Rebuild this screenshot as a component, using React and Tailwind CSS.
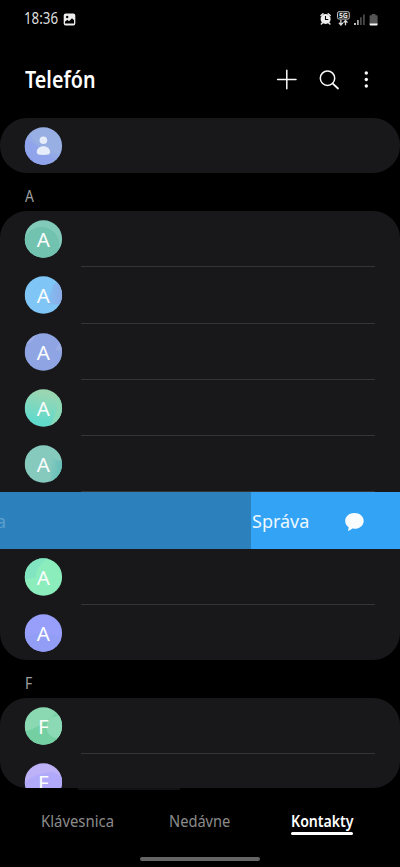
import React from "react";

const contactsA = [
  { letter: "A", base: "#82cbbb", shape: <circle cx="17" cy="25" r="18" fill="#72c2b0" /> },
  { letter: "A", base: "#7fc6f7", shape: <path d="M29 8 40 4V28L22 29Z" fill="url(#sky)" /> },
  { letter: "A", base: "#8fa5e3", shape: <path d="M0 12C6 10 11 6 12 0H0ZM31 17C32 13 35 10 38 9V18Z" fill="#9bade4" /> },
  { letter: "A", base: "url(#mint)", shape: <path d="M33 8C34 20 30 30 24 38H38V8Z" fill="#8fd8b4" opacity=".8" /> },
  { letter: "A", base: "#86cabe", shape: <path d="M26 9C30 14 34 16 38 16V38H25C27 32 27 27 25 24Z" fill="url(#teal)" /> },
  { swipe: true },
  { letter: "A", base: "#8aedbb", shape: <path d="M0 0H24C16 5 12 12 11 19L0 22Z" fill="#7fe2c3" opacity=".8" /> },
  { letter: "A", base: "#979ffa", shape: <path d="M0 24C12 17 26 18 38 25V38H0Z" fill="#929df6" /> },
];

const contactsF = [
  { letter: "F", base: "#8bd9b2", shape: <><path d="M0 25C14 20 25 13 32 6L38 38H0Z" fill="#74d0a2" /><circle cx="33" cy="20" r="11" fill="#8bdab5" /></> },
  { letter: "F", base: "#bdb2f8", shape: <path d="M0 20C10 10 21 10 29 9L38 14V38H0Z" fill="#b1aafa" /> },
];

function Avatar({ letter, base, shape, id }) {
  return (
    <svg className="block shrink-0" width="39" height="38" viewBox="-0.4 0 39 38">
      <defs>
        <clipPath id={id}>
          <circle cx="19" cy="19" r="18.7" />
        </clipPath>
        <linearGradient id="mint" x1="0.6" y1="0" x2="0.4" y2="1">
          <stop offset="0.1" stopColor="#9bd6b2" />
          <stop offset="0.85" stopColor="#62dacb" />
        </linearGradient>
        <linearGradient id="sky">
          <stop offset="0" stopColor="#7fc1f5" />
          <stop offset="1" stopColor="#8ea7e4" />
        </linearGradient>
        <linearGradient id="teal" x1="0" y1="0" x2="1" y2="0.5">
          <stop offset="0.2" stopColor="#83c9be" />
          <stop offset="1" stopColor="#63bdb8" />
        </linearGradient>
      </defs>
      <g clipPath={`url(#${id})`}>
        <rect width="38" height="38" fill={base} />
        {shape}
      </g>
      {letter && (
        <text x="19" y="27.300" textAnchor="middle" fontSize="20.500" fill="#fbfdfd">
          {letter}
        </text>
      )}
    </svg>
  );
}

function SwipeRow() {
  return (
    <div className="flex h-full w-full bg-[#32a3f5]">
      <div className="flex w-[251px] items-center overflow-hidden bg-[#2c81bc] pt-[2px] text-[18px] text-[#5b9fce]">
        <span className="-ml-[4px]">a</span>
      </div>
      <div className="flex flex-1 items-center justify-between pt-[2px] pr-[36.500px] pl-px">
        <span className="text-[18px] text-[#eef8ff]">Správa</span>
        <svg width="19" height="18" viewBox="0 0 19 18" fill="#fafcfe">
          <path d="M9.500 0C4.300 0 .2 3.400.2 7.900c0 2.600 1.200 4.800 3.400 6.200.1 1.300-.2 2.300-.6 3.300-.1.4.2.6.5.4 1.600-.6 2.900-1.400 4-2.200.6.1 1.300.1 2 .1 5.200 0 9.200-3.400 9.200-7.800S14.700 0 9.500 0Z" />
        </svg>
      </div>
    </div>
  );
}

function ContactRow({ contact, id, last }) {
  if (contact.swipe) {
    return (
      <div className="h-[56.300px]">
        <SwipeRow />
      </div>
    );
  }
  return (
    <div className="flex h-[56.300px] items-center pl-[24px]">
      <Avatar {...contact} id={id} />
      <div className={`mr-[25px] ml-[18px] flex-1 self-stretch border-b ${last ? "border-transparent" : "border-[#353537]"}`} />
    </div>
  );
}

function SectionLabel({ children }) {
  return (
    <div className="flex h-[38px] items-center pt-[9px] pl-[25px] text-[15.500px] leading-none text-[#a0a0a0]">
      <span className="origin-left scale-x-[0.9]">{children}</span>
    </div>
  );
}

function StatusBar() {
  return (
    <div className="flex h-[38px] items-center pl-[23.500px]">
      <div className="w-[39.500px] text-[15.500px] leading-none text-[#dedede]">
        <span className="inline-block origin-left scale-x-[0.860]">18:36</span>
      </div>
      <svg width="13" height="13" viewBox="0 0 13 13">
        <rect x=".7" y=".4" width="11.600" height="12" rx="2" fill="#ededed" />
        <circle cx="4.200" cy="4" r="1.200" fill="#000" />
        <path d="M2 10.500 2 8.800 4.300 6.800 6 8.300 9 5.200 11 7.200V10.500Z" fill="#000" />
      </svg>
      <svg className="mr-[21px] ml-auto" width="60" height="18" viewBox="0 0 60 18">
        <g stroke="#e8e8e8" strokeWidth="1.500" strokeLinecap="round">
          <path d="M2 5.500 4 3.700M11.200 5.500 9.200 3.700M2.300 14 3.700 12.600M10.900 14 9.500 12.600" />
        </g>
        <circle cx="6.600" cy="9" r="5" fill="#efefef" />
        <path d="M6.500 6V9.500H9.300" fill="none" stroke="#000" strokeWidth="1.100" />
        <rect x="18.500" y="1.700" width="11.800" height="7.400" rx="1.500" fill="#151515" stroke="#bdbdbd" strokeWidth="1" />
        <text x="24.400" y="8" textAnchor="middle" fontSize="7.200" fontWeight="700" fill="#e0e0e0" textLength="9" lengthAdjust="spacingAndGlyphs">5G</text>
        <path d="M21.900 10V14.700M19.900 12.800 21.900 15 23.900 12.800M26.500 15.300V11M24.500 12.600 26.500 10.500 28.500 12.600" fill="none" stroke="#dadada" strokeWidth="1.300" />
        <path d="M36 13V15" stroke="#e0e0e0" strokeWidth="1.700" />
        <path d="M38.900 10V15" stroke="#aaa" strokeWidth="1.700" />
        <path d="M41.900 7.300V15M44.900 4.500V15" stroke="#4c4c4c" strokeWidth="1.700" />
        <path d="M52.800 4H56.400V5.200H58Q58.600 5.200 58.600 6V14H50.600V6Q50.600 5.200 51.200 5.200H52.800Z" fill="#555" />
        <path d="M50.600 13.500H58.600V14.500Q58.600 15.500 57.600 15.500H51.600Q50.600 15.500 50.600 14.500Z" fill="#f5f5f5" />
      </svg>
    </div>
  );
}

function Header() {
  return (
    <header className="flex h-20 items-center pt-[4px] pl-[25px] text-white">
      <h1 className="w-[251px] text-[22.500px] leading-none font-semibold">
        <span className="inline-block origin-left scale-x-[0.875]">Telefón</span>
      </h1>
      <svg width="100" height="24" viewBox="0 0 100 24" fill="none" stroke="#fafafa" strokeWidth="1.500" strokeLinecap="round">
        <path d="M1.600 11.500H20M10.800 2.200V20.800" />
        <circle cx="51.500" cy="10.200" r="7.200" />
        <path d="M56.800 15.600 62 20.500" strokeWidth="1.800" />
        <g fill="#fafafa" stroke="none">
          <circle cx="90.300" cy="5" r="1.700" />
          <circle cx="90.300" cy="11.500" r="1.700" />
          <circle cx="90.300" cy="18" r="1.700" />
        </g>
      </svg>
    </header>
  );
}

function TabBar() {
  return (
    <nav className="flex h-[79px] flex-col justify-between pb-[6px] text-[15.500px] leading-[20px] text-[#8b8b8b]">
      <div>
        <div className="ml-[78px] h-[2px] w-[102px] bg-[#111113]" />
        <div className="flex pt-[21px] pl-[41px]">
          <div className="w-[128px]"><span className="inline-block origin-left scale-x-[0.960]">Klávesnica</span></div>
          <div className="w-[122px]"><span className="inline-block origin-left scale-x-[0.945]">Nedávne</span></div>
          <div className="w-[62px] whitespace-nowrap text-white">
            <div className="h-[21.300px]"><span className="inline-block origin-left scale-x-[0.910] font-semibold">Kontakty</span></div>
            <div className="h-[2.500px] rounded-full bg-white" />
          </div>
        </div>
      </div>
      <div className="mx-auto h-[4px] w-[120px] rounded-full bg-[#656565]" />
    </nav>
  );
}

export default function App() {
  return (
    <div className="flex h-[867px] w-[400px] flex-col overflow-hidden bg-black font-['Noto_Sans',sans-serif]">
      <StatusBar />
      <Header />
      <section className="flex h-[55px] shrink-0 items-center rounded-[27px] bg-[#18181a] pl-[24px]">
        <Avatar
          id="me"
          base="#98afe3"
          shape={
            <>
              <path d="M0 12C12 15 17 26 31 32L22 38H0Z" fill="#8c9ff0" />
              <path d="M5 7C13 20 20 26 36 28L28 38H12L0 22Z" fill="#92a7ea" opacity=".7" />
              <circle cx="19" cy="13.300" r="3.800" fill="#e6ecfa" />
              <path d="M12.300 25.500C12.300 21.500 15.300 19.300 19 19.300S25.700 21.500 25.700 25.500Q25.700 28 19 28T12.300 25.500Z" fill="#e6ecfa" />
            </>
          }
        />
      </section>
      <SectionLabel>A</SectionLabel>
      <section className="h-[449px] shrink-0 overflow-hidden rounded-[27px] bg-[#18181a]">
        {contactsA.map((c, i) => (
          <ContactRow key={i} contact={c} id={`a${i}`} last={i === contactsA.length - 1} />
        ))}
      </section>
      <SectionLabel>F</SectionLabel>
      <section className="h-[90px] shrink-0 overflow-hidden rounded-[27px] bg-[#18181a]">
        {contactsF.map((c, i) => (
          <ContactRow key={i} contact={c} id={`f${i}`} />
        ))}
      </section>
      <TabBar />
    </div>
  );
}
